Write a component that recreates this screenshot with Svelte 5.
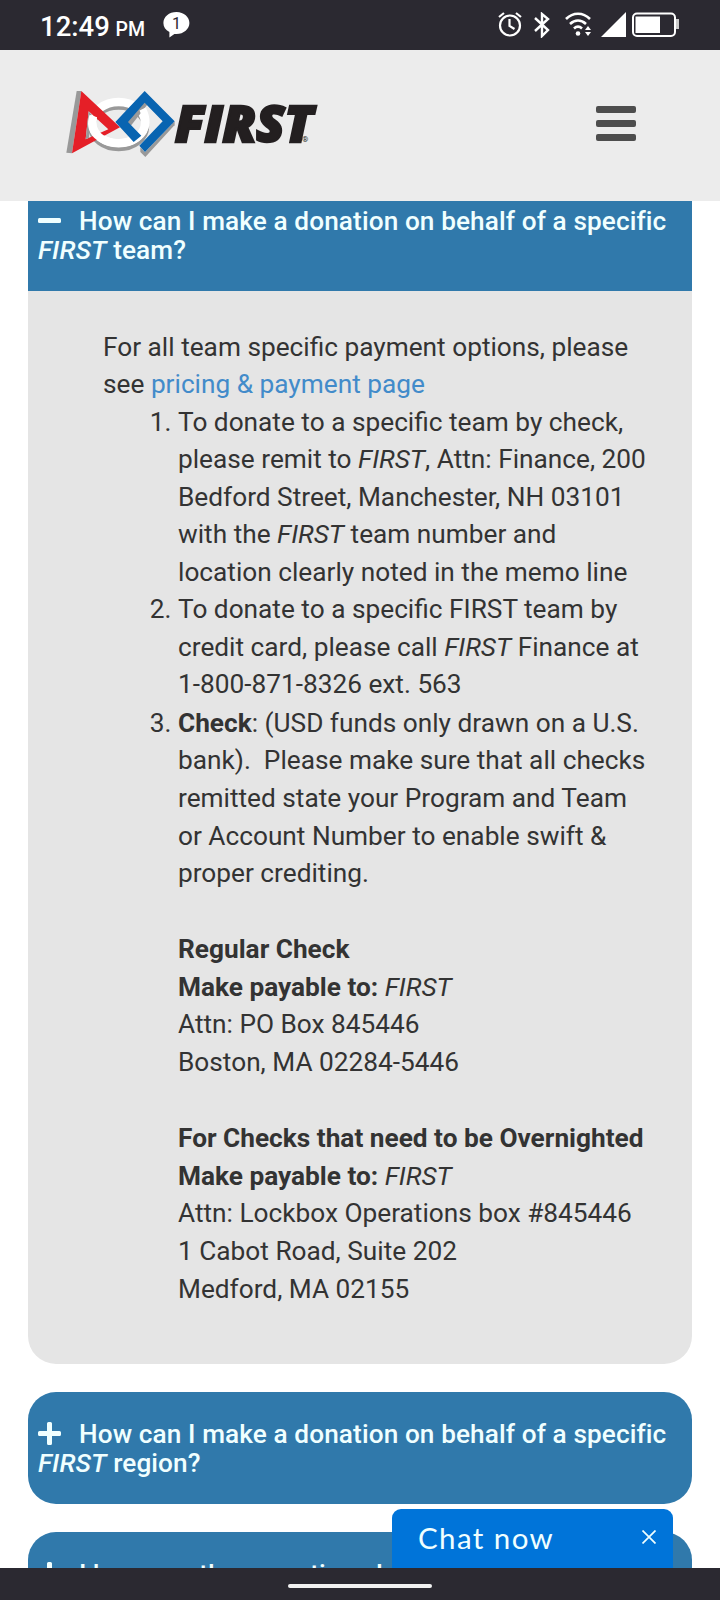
<script lang="ts">
	let menuOpen = false;
	let chatVisible = true;
</script>

<div class="screen">
	<div class="status">
		<div class="clock">12:49 <small>PM</small></div>
		<svg class="bubble" width="27" height="26" viewBox="0 0 27 26">
			<path
				d="M13.500 0C6 0 .4 4.800.4 11c0 4 2 7 6 9v5.500l5-3.500h2c7.400 0 13-5 13-11S21 0 13.500 0z"
				fill="#fff"
			/>
			<text x="13.500" y="17" text-anchor="middle" font-size="16" fill="#2a2830">1</text>
		</svg>
		<svg class="system" width="184" height="26" viewBox="0 0 184 26" fill="none" stroke="#fff">
			<g stroke-width="2.200">
				<circle cx="12" cy="13.500" r="10" />
				<path d="M11.500 7v7l5 3M1 5l5-4M18 1l5 4" />
			</g>
			<path d="M37 6l13 12-6 6V2l6 5-13 12" stroke-width="2.400" />
			<path
				d="M68 7c7-7 17-7 24 0M72 12c5-4.500 11-4.500 16 0M76 16.500c2.500-2.300 5.500-2.300 8 0"
				stroke-width="2.600"
			/>
			<g fill="#fff" stroke="none">
				<circle cx="80" cy="21.500" r="2.300" />
				<path d="M87 18h6l-3-4zM87 20h6l-3 4zM103 25h25V0z" />
				<rect x="137.500" y="4.500" width="24.500" height="16.500" />
				<path d="M178 7h3v10h-3z" fill="#ccc" />
			</g>
			<rect x="135" y="1.500" width="42" height="22.500" rx="4" stroke-width="2" />
		</svg>
	</div>

	<header>
		<svg class="logo" width="252" height="68" viewBox="66 90 252 68">
			<g transform="translate(64 88) scale(.3333)">
				<!-- shadows -->
				<path d="M52 9H38L7 194l17 2z" fill="#999" />
				<path d="M242 22l90 92v-14l-89 92-14-14v14l15 15 88-96z" fill="#999" />
				<ellipse cx="164" cy="117" rx="81" ry="62" fill="none" stroke="#999" stroke-width="21" />
				<!-- ring, triangle, then the front half of the ring -->
				<ellipse cx="164" cy="104" rx="79" ry="62" fill="none" stroke="#fff" stroke-width="25" />
				<path
					d="M52 9l116 109L24 196zM74 70l-9 84 68-30z"
					fill="#e51f27"
					fill-rule="evenodd"
				/>
				<path d="M74 70l-9 84 10-5 7-70z" fill="#999" />
				<path
					d="M88 84c-16 46 22 81 76 81 26 0 48-8 62-22"
					fill="none"
					stroke="#fff"
					stroke-width="24"
				/>
				<path d="M188 102l54-60 8 8-50 64z" fill="#999" />
				<path
					d="M242 9l90 91-89 92-17-19 70-73-54-56-50 58 40 41-23 19-55-60z"
					fill="#0864b1"
				/>
				<path d="M236 63c14 27 12 54-3 74" fill="none" stroke="#fff" stroke-width="21" />
			</g>
			<text class="wordmark" x="175" y="142" textLength="138" lengthAdjust="spacingAndGlyphs">FIRST</text>
			<text x="302" y="142" font-size="8" fill="#231f20">®</text>
		</svg>
		<button
			class="menu"
			aria-label="Menu"
			aria-expanded={menuOpen}
			on:click={() => (menuOpen = !menuOpen)}
		>
			<span></span>
			<span></span>
			<span></span>
		</button>
	</header>

	<main>
		<section class="item open">
			<h2>
				<svg class="sign" width="23" height="23" viewBox="0 0 23 23">
					<rect y="9" width="23" height="5" rx="1.500" />
				</svg>How can I make a donation on behalf of a specific <i>FIRST</i> team?
			</h2>
			<div class="answer">
				<p>
					For all team specific payment options, please see
					<a href="#pricing">pricing &amp; payment page</a>
				</p>
				<ol>
					<li>
						To donate to a specific team by check, please remit to <i>FIRST</i>, Attn: Finance, 200
						Bedford Street, Manchester, NH 03101 with the <i>FIRST</i> team number and location clearly
						noted in the memo line
					</li>
					<li>
						To donate to a specific FIRST team by credit card, please call <i>FIRST</i> Finance at
						1-800-871-8326 ext. 563
					</li>
					<li class="check">
						<b>Check</b>: (USD funds only drawn on a U.S. bank).&nbsp; Please make sure that all checks
						remitted state your Program and Team or Account Number to enable swift &amp; proper
						crediting.
						<address>
							<b>Regular Check</b><br />
							<b>Make payable to:</b> <i>FIRST</i><br />
							Attn: PO Box 845446<br />
							Boston, MA 02284-5446
						</address>
						<address>
							<b>For Checks that need to be Overnighted</b><br />
							<b>Make payable to:</b> <i>FIRST</i><br />
							Attn: Lockbox Operations box #845446<br />
							1 Cabot Road, Suite 202<br />
							Medford, MA 02155
						</address>
					</li>
				</ol>
			</div>
		</section>

		<section class="item">
			<h2>
				<svg class="sign" width="23" height="23" viewBox="0 0 23 23">
					<path
						d="M9 1.500Q9 0 10.500 0h2Q14 0 14 1.500V9h7.500Q23 9 23 10.500v2q0 1.500-1.500 1.500H14v7.500q0 1.500-1.500 1.500h-2Q9 23 9 21.500V14H1.500Q0 14 0 12.500v-2Q0 9 1.500 9H9z"
					/>
				</svg>How can I make a donation on behalf of a specific <i>FIRST</i> region?
			</h2>
		</section>

		<section class="item">
			<h2>
				<svg class="sign" width="23" height="23" viewBox="0 0 23 23">
					<path
						d="M9 1.500Q9 0 10.500 0h2Q14 0 14 1.500V9h7.500Q23 9 23 10.500v2q0 1.500-1.500 1.500H14v7.500q0 1.500-1.500 1.500h-2Q9 23 9 21.500V14H1.500Q0 14 0 12.500v-2Q0 9 1.500 9H9z"
					/>
				</svg>I have another question about
			</h2>
		</section>
	</main>

	{#if chatVisible}
		<div class="chat">
			<span>Chat now</span>
			<button aria-label="Close chat" on:click={() => (chatVisible = false)}>
				<svg width="14" height="14" viewBox="0 0 14 14">
					<path d="M.5.5l13 13M13.500.5l-13 13" stroke="#f0ffff" stroke-width="1.700" />
				</svg>
			</button>
		</div>
	{/if}

	<div class="gesture"><span></span></div>
</div>

<style>
	:global(body) {
		margin: 0;
		background: #fff;
	}

	.screen {
		position: relative;
		display: flex;
		flex-direction: column;
		width: 720px;
		height: 1600px;
		overflow: hidden;
		font-family: Roboto, 'Liberation Sans', sans-serif;
		color: #333;
	}

	.status {
		display: flex;
		flex: none;
		align-items: center;
		box-sizing: border-box;
		height: 50px;
		padding: 0 38px 0 40px;
		background: #2b2931;
		color: #fff;
	}

	.clock {
		width: 123px;
		padding-top: 2px;
		font-size: 27.5px;
		font-weight: 500;
		white-space: nowrap;
	}

	.clock small {
		margin-left: -1px;
		font-size: 19.5px;
	}

	.system {
		margin-left: auto;
	}

	header {
		display: flex;
		flex: none;
		align-items: flex-start;
		justify-content: space-between;
		box-sizing: border-box;
		height: 151px;
		padding: 40px 84px 0 66px;
		background: #ececec;
	}

	.logo {
		overflow: visible;
	}

	.wordmark {
		font: italic 800 50px 'Open Sans', sans-serif;
		fill: #231f20;
		stroke: #231f20;
		stroke-width: 2.5px;
	}

	button {
		padding: 0;
		border: none;
		background: none;
	}

	.menu {
		display: flex;
		flex-direction: column;
		gap: 7.5px;
		margin-top: 16px;
	}

	.menu span {
		width: 40px;
		height: 6.5px;
		border-radius: 2px;
		background: #4d4d4d;
	}

	main {
		display: flex;
		flex: 1;
		flex-direction: column;
		gap: 28px;
		min-height: 0;
		padding: 0 28px;
		overflow: hidden;
	}

	.item {
		flex: none;
		border-radius: 28px;
		background: #3079ab;
		overflow: hidden;
	}

	.item.open {
		border-radius: 0;
		background: none;
	}

	h2 {
		box-sizing: border-box;
		height: 112px;
		margin: 0;
		padding: 28px 10px 0;
		font-size: 26.2px;
		font-weight: 500;
		line-height: 29.3px;
		letter-spacing: 0.1px;
		color: #f0ffff;
	}

	.open h2 {
		height: 90px;
		padding-top: 6px;
		background: #3079ab;
	}

	.sign {
		margin-right: 18px;
		vertical-align: -2px;
		fill: #f0ffff;
	}

	.answer {
		box-sizing: border-box;
		height: 1073px;
		padding: 38px 41px 0 75px;
		border-radius: 0 0 28px 28px;
		background: #e5e5e5;
		font-size: 26.24px;
		line-height: 37.45px;
	}

	p,
	ol {
		margin: 0;
	}

	ol {
		padding-left: 75px;
	}

	a {
		color: #428bca;
		text-decoration: none;
	}

	.check {
		margin-top: 1px;
		line-height: 37.7px;
	}

	address {
		margin-top: 38px;
		font-style: normal;
	}

	.chat {
		position: absolute;
		right: 47px;
		bottom: 32px;
		display: flex;
		align-items: center;
		justify-content: space-between;
		box-sizing: border-box;
		width: 281px;
		height: 59px;
		padding: 0 17px 0 26px;
		border-radius: 9px 9px 0 0;
		background: #0074d9;
		color: #f0ffff;
		font-family: Lato, sans-serif;
		font-size: 29.5px;
		letter-spacing: 1.4px;
	}

	.chat span {
		margin-top: -3px;
	}

	.gesture {
		display: flex;
		flex: none;
		justify-content: center;
		align-items: center;
		height: 32px;
		background: #2b2931;
	}

	.gesture span {
		width: 144px;
		height: 4px;
		margin-top: 4px;
		border-radius: 2px;
		background: #f2f2f2;
	}
</style>
